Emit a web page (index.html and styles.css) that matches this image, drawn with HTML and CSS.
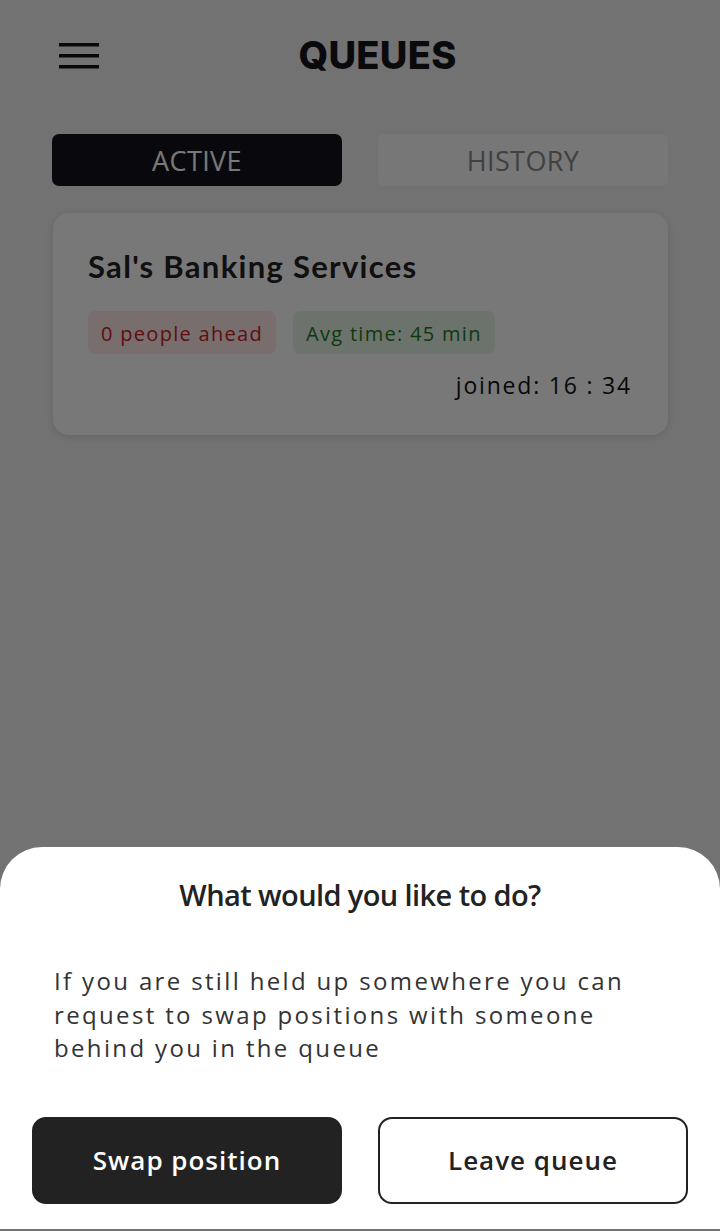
FILE: index.html
```html
<!DOCTYPE html>
<html lang="en">
<head>
<meta charset="utf-8">
<title>Queues</title>
<link rel="stylesheet" href="styles.css">
</head>
<body>
<div class="page">
  <header class="header">
    <button class="menu" aria-label="Menu">
      <svg width="40" height="28" viewBox="0 0 40 28"><rect x="0" y="1" width="40" height="3.5" fill="#111"/><rect x="0" y="12" width="40" height="3.5" fill="#111"/><rect x="0" y="23" width="40" height="3.5" fill="#111"/></svg>
    </button>
    <h1 class="title">QUEUES</h1>
  </header>

  <nav class="tabs">
    <div class="tab tab-active">ACTIVE</div>
    <div class="tab">HISTORY</div>
  </nav>

  <section class="card">
    <h2 class="card-title">Sal's Banking Services</h2>
    <div class="chips">
      <span class="chip chip-red">0 people ahead</span>
      <span class="chip chip-green">Avg time: 45 min</span>
    </div>
    <div class="joined">joined: 16 : 34</div>
  </section>
</div>

<div class="overlay"></div>

<div class="sheet">
  <h3 class="sheet-title">What would you like to do?</h3>
  <p class="sheet-text">If you are still held up somewhere you can request to swap positions with someone behind you in the queue</p>
  <div class="actions">
    <button class="btn btn-dark">Swap position</button>
    <button class="btn btn-outline">Leave queue</button>
  </div>
</div>
</body>
</html>
```

FILE: styles.css
```css
* { box-sizing: border-box; }
html, body {
  margin: 0;
  padding: 0;
  width: 720px;
  height: 1231px;
  overflow: hidden;
}
body {
  background: #f3f3f3;
  font-family: "Open Sans", "Noto Sans", sans-serif;
  position: relative;
}
.page {
  display: flex;
  flex-direction: column;
}
.header {
  display: flex;
  align-items: center;
  height: 110px;
  padding: 0 64px 0 59px;
}
.menu {
  border: 0;
  background: none;
  padding: 0;
  width: 40px;
  height: 28px;
  display: flex;
  margin-top: 1px;
}
.title {
  flex: 1;
  margin: 0;
  text-align: center;
  font-family: "Inter", sans-serif;
  font-weight: 800;
  font-size: 38px;
  color: #16161c;
  letter-spacing: 0.3px;
}
.tabs {
  display: flex;
  gap: 36px;
  padding: 24px 52px 0 52px;
}
.tab {
  flex: 1;
  height: 52px;
  border-radius: 7px;
  display: flex;
  align-items: center;
  justify-content: center;
  font-size: 27px;
  font-weight: 500;
  letter-spacing: 0.4px;
  color: #8a8a8a;
  background: #fdfdfd;
}
.tab-active {
  background: #15151c;
  color: #fff;
}
.card {
  margin: 27px 52px 0 53px;
  height: 222px;
  background: #fff;
  border-radius: 16px;
  box-shadow: 0 2px 10px rgba(0,0,0,0.12);
  padding: 30px 36px 0 35px;
  display: flex;
  flex-direction: column;
}
.card-title {
  margin: 0;
  font-family: "Lato", sans-serif;
  font-weight: 700;
  font-size: 31px;
  letter-spacing: 1.3px;
  color: #222;
  line-height: 46px;
}
.chips {
  display: flex;
  gap: 17px;
  margin-top: 22px;
}
.chip {
  height: 43px;
  border-radius: 7px;
  padding: 0 13px;
  display: flex;
  align-items: center;
  font-size: 20px;
  font-weight: 500;
  letter-spacing: 1.3px;
  padding-top: 1px;
}
.chip-red {
  background: #ffe9e9;
  color: #c81e1e;
}
.chip-green {
  background: #e6f4e6;
  color: #1f7a1f;
}
.joined {
  align-self: flex-end;
  margin-top: 15px;
  font-size: 23px;
  letter-spacing: 1.8px;
  color: #111;
}
.overlay {
  position: absolute;
  inset: 0;
  background: rgba(0,0,0,0.53);
}
.sheet {
  position: absolute;
  left: 0;
  right: 0;
  bottom: 2px;
  height: 382px;
  background: #fff;
  border-radius: 42px 42px 0 0;
  padding: 28px 32px 0 32px;
  display: flex;
  flex-direction: column;
}
.sheet-title {
  margin: 0;
  text-align: center;
  font-size: 29px;
  font-weight: 600;
  letter-spacing: -0.6px;
  color: #222;
  line-height: 40px;
}
.sheet-text {
  margin: 49px 36px 0 22px;
  font-size: 24px;
  line-height: 33.5px;
  letter-spacing: 2.35px;
  color: #333;
}
.actions {
  display: flex;
  gap: 36px;
  margin-top: 52px;
}
.btn {
  flex: 1;
  height: 87px;
  border-radius: 14px;
  font-family: "Open Sans", sans-serif;
  font-size: 26px;
  font-weight: 600;
  letter-spacing: 1px;
  cursor: pointer;
}
.btn-dark {
  background: #222;
  color: #fff;
  border: 2px solid #222;
}
.btn-outline {
  background: #fff;
  color: #222;
  border: 2px solid #222;
}
```
